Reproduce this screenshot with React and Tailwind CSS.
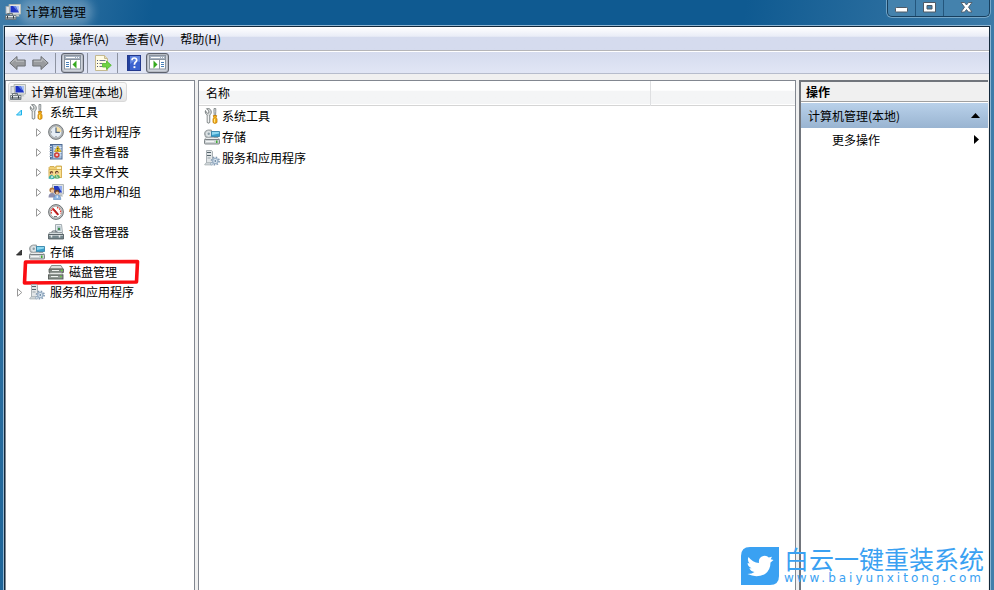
import { useState } from "react"
import clsx from "clsx"

/* ---------- icons ---------- */

function ComputerIcon() {
  return (
    <svg width="16" height="16" viewBox="0 0 16 16" className="shrink-0" aria-hidden="true">
      <rect x="1" y="2.500" width="3.500" height="7" fill="#dfe3e6" stroke="#a3abb0" strokeWidth="0.800" />
      <path d="M4 0.500h11.500v9.500L5 10.500z" fill="#e3e6e2" stroke="#b3b8b2" />
      <path d="M5.500 2h8.500v6.500L5.500 8.500z" fill="#1c33c4" />
      <path d="M10.500 2h3.500v6.500z" fill="#a9c0f5" />
      <path d="M8 2h3l1 4.500z" fill="#5f80e4" />
      <path d="M8.500 10.500h5l1 2h-7z" fill="#c3c7c5" />
      <path d="M2.500 11V9.500h5V11" fill="none" stroke="#6b757b" />
      <path d="M0.500 11.500h10.500v4h-10.500z" fill="#8d979c" stroke="#66717a" strokeWidth="0.800" />
      <path d="M1 12.500h9.500" stroke="#e4e9eb" />
      <path d="M2.500 12v2.500M8.500 12v2.500" stroke="#333c42" />
    </svg>
  )
}

function ToolsIcon() {
  return (
    <svg width="16" height="16" viewBox="0 0 16 16" className="shrink-0" aria-hidden="true">
      <path d="M2.500 0.700L4.800 3v2L3.700 5.300 2 3.800 1.500 2.500C0.800 4.500 1.800 6.300 3.200 6.900V14.500q1.300 1.300 2.600 0V6.900C7.800 5.900 7.900 2.200 5.300 0.700z" fill="#dadddd" stroke="#73797b" strokeWidth="0.900" />
      <path d="M4.300 7.500V14" stroke="#fff" strokeWidth="0.800" />
      <path d="M10 0.500h1.800v3L11.500 8h-1.200L9.900 3.500z" fill="#d9dcdd" stroke="#777d80" strokeWidth="0.800" />
      <path d="M9.300 7.500h3.400l-.6 2 .9 1.500v3.500q-2 1.800-4 0V11l.8-1.500z" fill="#f3b21b" stroke="#c17a08" strokeWidth="0.800" />
      <path d="M10.500 11v3.500" stroke="#ffe58b" />
    </svg>
  )
}

function ClockIcon() {
  return (
    <svg width="16" height="16" viewBox="0 0 16 16" className="shrink-0" aria-hidden="true">
      <circle cx="8" cy="8" r="7.400" fill="#b4b8ba" stroke="#6c7174" strokeWidth="0.900" />
      <circle cx="8" cy="8" r="5.700" fill="#e6edf4" stroke="#a1a6a9" strokeWidth="0.600" />
      <path d="M8 8V2.600A5.400 5.400 0 0 1 13.400 8z" fill="#f5dfa5" />
      <path d="M8 3.500V8.300h3.800" fill="none" stroke="#4e6480" strokeWidth="1.200" />
      <path d="M8 12v1M3 8h1" stroke="#6c7780" />
    </svg>
  )
}

function EventIcon() {
  return (
    <svg width="16" height="16" viewBox="0 0 16 16" className="shrink-0" aria-hidden="true">
      <rect x="2.500" y="0.500" width="11.500" height="14.500" fill="#a9c1de" stroke="#4f6a92" />
      <path d="M3 1h2v13.500H3z" fill="#5c7eaf" />
      <path d="M6 3.500h7.500M6 6h7.500M6 8.500h7.500M6 11h7.500" stroke="#e3ecf6" />
      <path d="M1 2.500h3M1 5h3M1 7.500h3M1 10h3M1 12.500h3" stroke="#c9d1dc" strokeWidth="1.200" />
      <path d="M9.800 2l3.200 5.500H6.600z" fill="#fbd324" stroke="#c29a1c" strokeWidth="0.700" />
      <path d="M9.800 3.800v1.700M9.800 6.200v.8" stroke="#332800" />
      <circle cx="8.800" cy="11" r="2.500" fill="#e2453e" stroke="#b42d2a" strokeWidth="0.600" />
      <path d="M7.900 10.100l1.800 1.800M9.700 10.100l-1.800 1.800" stroke="#fff" strokeWidth="0.900" />
    </svg>
  )
}

function SharedFolderIcon() {
  return (
    <svg width="16" height="16" viewBox="0 0 16 16" className="shrink-0" aria-hidden="true">
      <path d="M1 3.500l1-1h4l1 1.200L8.200 2H13.500v11.500h-12z" fill="#f0cf71" stroke="#c9a240" strokeWidth="0.800" />
      <path d="M9 3h4v2H9z" fill="#fff5cb" />
      <path d="M1 5.500h12.500v8H1z" fill="#f9df8e" stroke="#d0a84a" strokeWidth="0.700" />
      <circle cx="3.500" cy="8.800" r="1.700" fill="#714429" />
      <circle cx="3.800" cy="9.500" r="1.100" fill="#edc39c" />
      <path d="M0.500 14.500q.5-3.500 3-3.500t3 3.500q-3 1.500-6 0z" fill="#3cada5" />
      <circle cx="8.800" cy="8.500" r="1.700" fill="#5d3b25" />
      <circle cx="9" cy="9.200" r="1.100" fill="#edc39c" />
      <path d="M6 14q.4-3.300 3-3.300t3 3.300q-3 1.500-6 0z" fill="#5fae6a" />
      <path d="M3 14.500l1-2.500.8 2M8.500 11.300l.8 2.700" stroke="#e4f5f2" strokeWidth="0.800" fill="none" />
    </svg>
  )
}

function UsersIcon() {
  return (
    <svg width="16" height="16" viewBox="0 0 16 16" className="shrink-0" aria-hidden="true">
      <path d="M4.500 0.500h11v9.500h-11z" fill="#dee2e2" stroke="#b1b7b9" />
      <path d="M6 2h8v6.500H6z" fill="#2038bf" />
      <path d="M10 2h4v6.500z" fill="#8faaf0" />
      <path d="M10 10.500h4l1 2h-5z" fill="#b5bbbc" />
      <circle cx="4" cy="6" r="2.600" fill="#b07a3e" />
      <circle cx="4.500" cy="6.900" r="1.700" fill="#f1c69d" />
      <path d="M0.500 13.500q0-4.500 3.500-4.500t3.500 4.500z" fill="#8d8fae" />
      <circle cx="9" cy="8.200" r="2.400" fill="#6b4427" />
      <circle cx="9.200" cy="9" r="1.600" fill="#edbf94" />
      <path d="M5.500 15.500q.2-4.500 3.700-4.500t3.600 4.500z" fill="#8bb4e1" stroke="#5a86bb" strokeWidth="0.600" />
      <path d="M9.200 11.500v2.500" stroke="#fff" />
    </svg>
  )
}

function PerformanceIcon() {
  return (
    <svg width="16" height="16" viewBox="0 0 16 16" className="shrink-0" aria-hidden="true">
      <circle cx="8" cy="8" r="7.400" fill="#c7caca" stroke="#5d6264" strokeWidth="0.900" />
      <circle cx="8" cy="8" r="5.800" fill="#fff" stroke="#8e9393" strokeWidth="0.600" />
      <path d="M3.600 9.500A4.600 4.600 0 0 1 4.300 5.200M9 3.500A4.600 4.600 0 0 1 12.400 9.500" fill="none" stroke="#e04438" strokeWidth="1.300" strokeDasharray="1.500 .8" />
      <path d="M4.500 4.300l5.700 6.500" stroke="#d12020" strokeWidth="2" />
      <path d="M6.500 5.500l4 5" stroke="#671010" strokeWidth="0.600" />
      <path d="M6 12.500h3" stroke="#727879" />
    </svg>
  )
}

function DeviceIcon() {
  return (
    <svg width="16" height="16" viewBox="0 0 16 16" className="shrink-0" aria-hidden="true">
      <path d="M7.500 0.500h6l1 8h-7z" fill="#e6ebed" stroke="#9aa4a9" strokeWidth="0.900" />
      <path d="M9 2h3.500l.5 5H9z" fill="#b4c5cc" />
      <circle cx="11" cy="5" r="1.200" fill="#3c8c4b" />
      <path d="M3.500 8.500l1-1.500h4l1 1.500" fill="none" stroke="#586268" />
      <path d="M1.500 8.500h12l2 2H0.500z" fill="#d7dddf" stroke="#7d868b" strokeWidth="0.700" />
      <path d="M0.500 10.500h15V15H0.500z" fill="#74868b" stroke="#4d575c" strokeWidth="0.800" />
      <path d="M1 11.500h14" stroke="#b7c1c4" />
      <path d="M3.500 11v2.500M11.500 11v2.500" stroke="#e3e7e8" strokeWidth="1.500" />
    </svg>
  )
}

function StorageIcon() {
  return (
    <svg width="16" height="16" viewBox="0 0 16 16" className="shrink-0" aria-hidden="true">
      <path d="M0.500 5q0-4 4.500-4h2.500v7h-6z" fill="#b8bdbf" stroke="#8c9396" strokeWidth="0.800" />
      <circle cx="4.700" cy="4.800" r="3.500" fill="#dde3e5" stroke="#9aa1a4" strokeWidth="0.700" />
      <circle cx="4.700" cy="4.800" r="1.200" fill="#8b9da6" />
      <path d="M7.500 2.500h8v5h-8z" fill="#3b9fca" stroke="#2b7da5" strokeWidth="0.800" />
      <path d="M8 3h7v1.500L8 6z" fill="#8ed7ef" />
      <path d="M10 8.500h4" stroke="#5a6670" />
      <path d="M2 8.500h12l1.500 2H0.500z" fill="#eceeee" stroke="#9a9fa2" strokeWidth="0.700" />
      <rect x="0.500" y="10.500" width="15" height="4.500" rx="0.800" fill="#ced3d5" stroke="#73797d" strokeWidth="0.900" />
      <path d="M2 12.500h8" stroke="#f4f5f5" />
      <rect x="12" y="11.500" width="1.500" height="2.500" fill="#43ad37" />
    </svg>
  )
}

function DiskIcon() {
  return (
    <svg width="16" height="16" viewBox="0 0 16 16" className="shrink-0" aria-hidden="true">
      <path d="M3.500 1.500h9.500l2 3.500h-13.500z" fill="#dde0dd" stroke="#7b817d" strokeWidth="0.900" />
      <path d="M1 5h14.500v3.500H1z" fill="#7d847f" stroke="#555b57" strokeWidth="0.800" />
      <path d="M4 6.500h7" stroke="#eef0ed" />
      <path d="M2.500 8.500h11l1.500 2.500h-14.500z" fill="#e4e6e4" stroke="#8b918d" strokeWidth="0.700" />
      <rect x="0.500" y="11" width="14.500" height="4" fill="#8f9691" stroke="#555b57" strokeWidth="0.900" />
      <path d="M3 12.500h7" stroke="#f0f2f0" />
      <path d="M12 12.500h1.500M13 6.500h1.500" stroke="#65d43c" strokeWidth="1.300" />
    </svg>
  )
}

function ServicesIcon() {
  return (
    <svg width="16" height="16" viewBox="0 0 16 16" className="shrink-0" aria-hidden="true">
      <path d="M2.500 0.500h5l1 1v11l-1 1h-5z" fill="#e2e6e8" stroke="#a1a9ae" strokeWidth="0.900" />
      <path d="M3 2.500h4M3 5.500h4" stroke="#54636b" strokeWidth="1.200" />
      <path d="M3.500 8h3" stroke="#9ba5aa" />
      <path d="M0.800 14l1.700-1.500h5V15H0.800z" fill="#cdd3d6" stroke="#9ea7ab" strokeWidth="0.600" />
      <circle cx="11.300" cy="11" r="3.700" fill="none" stroke="#8299b1" strokeWidth="1.800" strokeDasharray="1.500 1.400" />
      <circle cx="11.300" cy="11" r="2.600" fill="#dfe9f2" stroke="#9db3c9" strokeWidth="1.300" />
      <circle cx="11.300" cy="11" r="0.900" fill="#6f89a4" />
      <circle cx="7.800" cy="13.800" r="1.300" fill="#dbe5ed" stroke="#8fa5ba" strokeWidth="0.800" />
    </svg>
  )
}

function ArrowIcon({ flip }) {
  return (
    <svg width="17" height="16" viewBox="0 0 17 16" className={clsx("shrink-0", flip && "-scale-x-100")} aria-hidden="true">
      <path d="M0.800 8L8 1.500v3.500h8.200v6H8v3.500z" fill="#999b9e" stroke="#6d7074" strokeLinejoin="round" />
      <path d="M2.500 7.700L7 3.700v2.500h8" fill="none" stroke="#c0c2c4" />
    </svg>
  )
}

function PaneIcon({ right }) {
  return (
    <svg width="17" height="15" viewBox="0 0 17 15" aria-hidden="true">
      <rect x="0.500" y="0.500" width="16" height="13.500" fill="#fff" stroke="#8b949f" />
      <path d="M1 1h15v3H1z" fill="#a7b2c1" />
      <path d="M2 2.500h9M12 2.500h1M14 2.500h1" stroke="#fff" />
      <path d="M1 4.500h15" stroke="#8b949f" />
      {right ? (
        <>
          <path d="M10.500 5v9" stroke="#8b949f" />
          <path d="M12 7.500h3M12 9.500h3M12 11.500h3" stroke="#477fb8" />
          <path d="M4.500 5.500L8.500 9.500l-4 4z" fill="#35a91e" />
        </>
      ) : (
        <>
          <path d="M6.500 5v9" stroke="#8b949f" />
          <path d="M2 7.500h3M2 9.500h3M2 11.500h3" stroke="#477fb8" />
          <path d="M12.500 5.500L8.500 9.500l4 4z" fill="#35a91e" />
        </>
      )}
    </svg>
  )
}

function ExportIcon() {
  return (
    <svg width="17" height="16" viewBox="0 0 17 16" aria-hidden="true">
      <path d="M0.500 0.500h9l3 3v12h-12z" fill="#fffbe4" stroke="#c4b990" />
      <path d="M9.500 0.500v3h3" fill="#eadfb4" stroke="#c4b990" />
      <path d="M2 5.500h1M2 8.500h1M2 11.500h1" stroke="#4e5577" />
      <path d="M4.500 5.500h6M4.500 8.500h3M4.500 11.500h3" stroke="#6f7691" />
      <path d="M7.500 8.500h4V6l4.800 4.300-4.800 4.200V12h-4z" fill="#6fd343" stroke="#4fb52e" strokeWidth="0.800" />
    </svg>
  )
}

function HelpIcon() {
  return (
    <svg width="14" height="16" viewBox="0 0 14 16" aria-hidden="true">
      <rect x="0.500" y="0.500" width="13" height="15" fill="#3a62cf" stroke="#23398d" />
      <path d="M1 1h2v14H1z" fill="#23429f" />
      <path d="M3 1h10v6Q7 5 3 9z" fill="#5f84e0" />
      <path d="M5 5.200Q5 3 7.300 3t2.400 2.200Q9.700 6.500 8.400 7.300 7.400 8 7.400 9.800" fill="none" stroke="#fff" strokeWidth="1.700" />
      <path d="M6.500 11.200h1.900v1.900H6.500z" fill="#fff" />
    </svg>
  )
}

function BirdLogo() {
  return (
    <svg width="38" height="38" viewBox="0 0 38 38" className="shrink-0" aria-hidden="true">
      <path d="M9 0h29v29q0 9-9 9H0V9q0-9 9-9z" fill="#3aa1f2" />
      <path d="M7.500 10q4 5.500 10.500 6-.8-5.500 4.300-7 3.500-.7 5.500 1.600l3.200-.8-1.300 2.400 2.800.8-3 2.400q0 7.500-5.500 11.500-8 4.500-17.500.2 4.600-.1 7-2.200-4-.7-5.200-3.700h2.300q-4-1.800-4-5.300l2.100.5q-2.800-2.900-1.200-6.400z" fill="#fff" />
    </svg>
  )
}

/* ---------- data ---------- */

const TREE = [
  {
    label: "系统工具",
    Icon: ToolsIcon,
    state: "hot",
    children: [
      { label: "任务计划程序", Icon: ClockIcon, state: "closed" },
      { label: "事件查看器", Icon: EventIcon, state: "closed" },
      { label: "共享文件夹", Icon: SharedFolderIcon, state: "closed" },
      { label: "本地用户和组", Icon: UsersIcon, state: "closed" },
      { label: "性能", Icon: PerformanceIcon, state: "closed" },
      { label: "设备管理器", Icon: DeviceIcon },
    ],
  },
  {
    label: "存储",
    Icon: StorageIcon,
    state: "open",
    children: [{ label: "磁盘管理", Icon: DiskIcon, marked: true }],
  },
  { label: "服务和应用程序", Icon: ServicesIcon, state: "closed" },
]

const MENUS = ["文件(F)", "操作(A)", "查看(V)", "帮助(H)"]

/* ---------- parts ---------- */

function Expander({ state, label, onClick }) {
  if (!state) return <span className="w-[9px] shrink-0" />
  return (
    <button type="button" onClick={onClick} aria-label={`展开或折叠 ${label}`} className="w-[9px] shrink-0">
      <svg width="9" height="9" viewBox="0 0 9 9" aria-hidden="true">
        {state === "closed" && <path d="M2.500 0.800L6.800 4.500 2.500 8.200z" fill="#fff" stroke="#989898" />}
        {state === "open" && <path d="M6.500 2V7H1.500z" fill="#404040" stroke="#202020" strokeWidth="0.800" />}
        {state === "hot" && <path d="M6.500 2V7H1.500z" fill="#9fe4fb" stroke="#1cb3ea" />}
      </svg>
    </button>
  )
}

function TreeItem({ item, level }) {
  const [open, setOpen] = useState(item.state !== "closed")
  const { Icon } = item

  return (
    <li role="treeitem" aria-expanded={item.children ? open : undefined}>
      <div className={clsx("relative flex h-5 items-center gap-[5px]", level === 1 ? "pl-[9px]" : "pl-7")}>
        <Expander
          state={item.children && !open ? "closed" : item.state}
          label={item.label}
          onClick={() => setOpen(!open)}
        />
        <button type="button" className="flex items-center gap-[5px] whitespace-nowrap">
          <Icon />
          {item.label}
        </button>
        {item.marked && (
          <svg width="120" height="28" viewBox="0 0 120 28" className="pointer-events-none absolute -top-1 left-4" aria-hidden="true">
            <path d="M3.500 4L115.500 3.500 114.500 24 2.500 25z" fill="none" stroke="#fb0d12" strokeWidth="3.600" strokeLinejoin="round" />
          </svg>
        )}
      </div>
      {item.children && open && (
        <ul role="group">
          {item.children.map((child) => (
            <TreeItem key={child.label} item={child} level={level + 1} />
          ))}
        </ul>
      )}
    </li>
  )
}

function TitleBar() {
  return (
    <header className="flex h-[26px] shrink-0 items-start justify-between">
      <div className="flex h-6 items-center gap-1 pl-[5px]">
        <ComputerIcon />
        <h1 className="rounded-full bg-white/25 px-[1px] text-xs shadow-[0_0_8px_6px_rgba(255,255,255,0.25)]">计算机管理</h1>
      </div>
      <div className="mr-1 flex h-[17px] overflow-hidden rounded-b-[5px] border border-t-0 border-[#173f5e] bg-[#4482ad] shadow-[0_0_0_1px_rgba(160,200,225,0.6)]">
        <button type="button" aria-label="最小化" className="flex w-7 justify-center border-r border-[#24567c] pt-[7px]">
          <svg width="13" height="6" viewBox="0 0 13 6" aria-hidden="true">
            <rect x="0.500" y="0.500" width="12" height="4.500" rx="0.800" fill="#fff" stroke="#4f5a66" />
          </svg>
        </button>
        <button type="button" aria-label="最大化" className="flex w-7 justify-center border-r border-[#24567c] pt-[2px]">
          <svg width="13" height="11" viewBox="0 0 13 11" aria-hidden="true">
            <path d="M0.500 0.500h12v9.500H0.500z M4 3.500v3.500h5v-3.500z" fillRule="evenodd" fill="#fff" stroke="#4f5a66" />
          </svg>
        </button>
        <button type="button" aria-label="关闭" className="flex w-[45px] justify-center pt-[2px]">
          <svg width="13" height="11" viewBox="0 0 13 11" aria-hidden="true">
            <path d="M1 0.500h3.500l2 2.500 2-2.500H12L8.500 5.200 12 10H8.500l-2-2.500-2 2.500H1l3.500-4.800z" fill="#fff" stroke="#4f5a66" strokeWidth="0.900" />
          </svg>
        </button>
      </div>
    </header>
  )
}

function MenuBar() {
  return (
    <nav className="flex h-6 shrink-0 items-center border-b border-[#b5b5b8] bg-linear-to-b from-white from-0% via-[#eaedf7] via-40% to-[#d5dbee] to-45% pl-[2px]">
      {MENUS.map((menu) => (
        <button key={menu} type="button" className="px-2">
          {menu}
        </button>
      ))}
    </nav>
  )
}

function Separator() {
  return <span className="h-5 w-px bg-[#8d93a1]" />
}

const pressed =
  "flex h-5 w-[23px] items-center justify-center rounded-[3px] border border-[#5e636e] bg-[#d3d7e0] shadow-[inset_0_0_2px_#6b7078]"

function ToolBar() {
  return (
    <div role="toolbar" className="flex h-[23px] shrink-0 items-center border-t border-b border-t-white border-b-[#b6bccc] bg-linear-to-b from-[#d5dbee] to-[#e1e6f5] pl-1">
      <div className="flex gap-[6px] pr-[6px]">
        <button type="button" aria-label="后退"><ArrowIcon /></button>
        <button type="button" aria-label="前进"><ArrowIcon flip /></button>
      </div>
      <Separator />
      <div className="px-[5px] pr-[3px]">
        <button type="button" aria-label="显示/隐藏控制台树" className={pressed}><PaneIcon /></button>
      </div>
      <Separator />
      <button type="button" aria-label="导出列表" className="px-[7px] pr-[5px]"><ExportIcon /></button>
      <Separator />
      <div className="flex items-center gap-[5px] pl-[9px]">
        <button type="button" aria-label="帮助"><HelpIcon /></button>
        <button type="button" aria-label="显示/隐藏操作窗格" className={pressed}><PaneIcon right /></button>
      </div>
    </div>
  )
}

function TreePane() {
  return (
    <aside className="w-[190px] shrink-0 border border-b-0 border-[#828790] bg-white pt-px">
      <div className="flex h-5 pl-[2px]">
        <button type="button" className="flex items-center gap-[5px] rounded-[3px] border border-[#d9d9d9] bg-linear-to-b from-[#fafafa] to-[#e5e5e5] pr-[3px] pl-px whitespace-nowrap">
          <ComputerIcon />
          计算机管理(本地)
        </button>
      </div>
      <ul role="tree">
        {TREE.map((item) => (
          <TreeItem key={item.label} item={item} level={1} />
        ))}
      </ul>
    </aside>
  )
}

function ListPane() {
  return (
    <main className="min-w-0 flex-1 border border-b-0 border-[#828790] bg-white">
      <table className="w-full table-fixed border-collapse">
        <thead>
          <tr className="h-6 border-b border-[#d5d5d5] bg-linear-to-b from-white from-40% to-[#f4f5f6] to-45%">
            <th scope="col" className="border-r border-[#dedfe1] pt-px pl-[7px] text-left font-normal">名称</th>
            <th className="w-[145px]" aria-label="空" />
          </tr>
        </thead>
        <tbody>
          {TREE.map(({ label, Icon }) => (
            <tr key={label} className="h-[21px]">
              <td colSpan={2} className="pt-px pl-[5px]">
                <button type="button" className="flex items-center gap-[2px]">
                  <Icon />
                  {label}
                </button>
              </td>
            </tr>
          ))}
        </tbody>
      </table>
    </main>
  )
}

function ActionsPane() {
  return (
    <aside className="w-[189px] shrink-0 border-t-2 border-l-2 border-[#71757c] bg-white">
      <h2 className="h-5 border-b border-[#a0a0a0] bg-[#f0f0f0] pl-[5px] leading-5 font-bold">操作</h2>
      <button type="button" className="mt-px flex h-[25px] w-full items-center justify-between bg-linear-to-b from-[#b9d1ea] to-[#99b4d1] pr-2 pl-[7px]">
        计算机管理(本地)
        <svg width="9" height="5" viewBox="0 0 9 5" aria-hidden="true"><path d="M4.500 0L9 5H0z" /></svg>
      </button>
      <button type="button" className="flex h-[23px] w-full items-center justify-between pr-[9px] pl-[31px]">
        更多操作
        <svg width="5" height="9" viewBox="0 0 5 9" aria-hidden="true"><path d="M0 0l5 4.500L0 9z" /></svg>
      </button>
    </aside>
  )
}

function Watermark() {
  return (
    <div className="pointer-events-none absolute right-2.5 bottom-1 flex items-center gap-[5px] text-[#3aa1f2]">
      <BirdLogo />
      <div>
        <p className="text-[25px] leading-6">白云一键重装系统</p>
        <p className="font-['DejaVu_Sans'] text-xs leading-4 tracking-[3px]">www.baiyunxitong.com</p>
      </div>
    </div>
  )
}

export default function App() {
  return (
    <div className="relative flex h-screen flex-col overflow-hidden bg-[linear-gradient(100deg,#3f7ca9,#0f5a91_14%,#0f5a91_68%,#427fab_94%)] font-['Noto_Sans_CJK_SC',sans-serif] text-xs text-black">
      <TitleBar />
      <div className="mr-1 ml-1 flex min-h-0 flex-1 flex-col border border-b-0 border-[#12283b] bg-[#f0f0f0] shadow-[0_0_0_1px_#8fb6d3]">
        <MenuBar />
        <ToolBar />
        <div className="flex min-h-0 flex-1 gap-[3px] pt-[6px] pr-px">
          <TreePane />
          <ListPane />
          <ActionsPane />
        </div>
      </div>
      <Watermark />
    </div>
  )
}
